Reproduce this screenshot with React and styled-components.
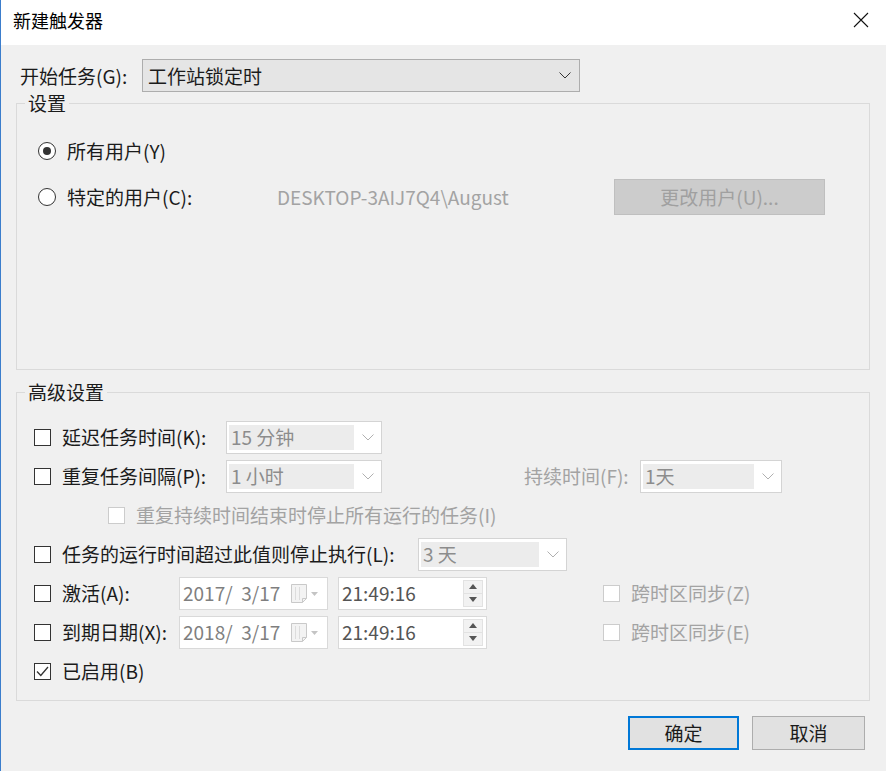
import React from 'react';
import styled, { createGlobalStyle } from 'styled-components';

const GlobalStyle = createGlobalStyle`
  html, body { margin: 0; padding: 0; background: #f0f0f0; }
  body { font-family: "Noto Sans CJK SC", "Microsoft YaHei", sans-serif; }
`;

const Window = styled.div`
  width: 886px;
  height: 771px;
  box-sizing: border-box;
  border-left: 1px solid #3b7dcc;
  background: #f0f0f0;
  display: flex;
  flex-direction: column;
  font-family: "Noto Sans CJK SC", "Microsoft YaHei", sans-serif;
  font-size: 19px;
  color: #1b1b1b;
  overflow: hidden;
`;

const TitleBar = styled.div`
  height: 45px;
  flex: none;
  background: #fff;
  display: flex;
  align-items: center;
  justify-content: space-between;
  padding: 0 17px 5px 12px;
  box-sizing: border-box;
`;

const Title = styled.span`
  font-size: 18px;
  line-height: 20px;
  color: #000;
`;

const Body = styled.div`
  padding: 14px 16px 0 15px;
  display: flex;
  flex-direction: column;
`;

const TopRow = styled.div`
  display: flex;
  align-items: center;
  height: 33px;
`;

const TopLabel = styled.span`
  width: 122px;
  margin-left: 4px;
  line-height: 20px;
  white-space: nowrap;
`;

const Select = styled.div`
  width: 438px;
  height: 33px;
  box-sizing: border-box;
  border: 1px solid #adadad;
  background: #e5e5e5;
  display: flex;
  align-items: center;
  justify-content: space-between;
  padding: 0 8px 0 5px;
  line-height: 20px;
`;

const Group = styled.fieldset`
  margin: ${p => p.$mt}px 0 0 0;
  padding: 0;
  border: 1px solid #dadada;
  height: ${p => p.$h}px;
  box-sizing: border-box;
  min-width: 0;
`;

const Legend = styled.legend`
  margin-left: 8px;
  padding: 0 3px;
  line-height: 20px;
  font-size: 19px;
`;

const GroupContent = styled.div`
  padding: ${p => p.$pt}px 0 0 ${p => p.$pl}px;
  display: flex;
  flex-direction: column;
  gap: ${p => p.$gap}px;
`;

const Row = styled.div`
  display: flex;
  align-items: center;
  height: ${p => p.$h || 34}px;
  padding-left: ${p => p.$pl || 0}px;
`;

const Radio = styled.span`
  width: 18px;
  height: 18px;
  box-sizing: border-box;
  border: 1px solid #333;
  border-radius: 50%;
  background: #fff;
  display: flex;
  align-items: center;
  justify-content: center;
  margin-right: 11px;
  flex: none;
  &::after {
    content: '';
    width: 8px;
    height: 8px;
    border-radius: 50%;
    background: #333;
    display: ${p => (p.$checked ? 'block' : 'none')};
  }
`;

const Text = styled.span`
  width: ${p => (p.$w ? `${p.$w}px` : 'auto')};
  margin-left: ${p => p.$ml || 0}px;
  color: ${p => (p.$dim ? '#a3a3a3' : '#1b1b1b')};
  line-height: 20px;
  white-space: nowrap;
  flex: none;
`;

const Button = styled.div`
  width: ${p => p.$w}px;
  height: ${p => p.$h}px;
  box-sizing: border-box;
  display: flex;
  align-items: center;
  justify-content: center;
  background: ${p => (p.$disabled ? '#cccccc' : '#e1e1e1')};
  border: ${p => (p.$primary ? '2px solid #0078d7' : p.$disabled ? '1px solid #bfbfbf' : '1px solid #adadad')};
  color: ${p => (p.$disabled ? '#a0a0a0' : '#1b1b1b')};
  line-height: 20px;
  flex: none;
`;

const Check = styled.span`
  width: 17px;
  height: 17px;
  box-sizing: border-box;
  border: 1px solid ${p => (p.$disabled ? '#cccccc' : '#333')};
  background: #fff;
  margin-right: 11px;
  margin-left: ${p => p.$ml || 0}px;
  display: flex;
  align-items: center;
  justify-content: center;
  flex: none;
`;

const Combo = styled.div`
  width: ${p => p.$w}px;
  height: 33px;
  box-sizing: border-box;
  border: 1px solid #d4d4d4;
  background: #fff;
  padding: 3px 0 3px 2px;
  display: flex;
  align-items: stretch;
  flex: none;
`;

const ComboField = styled.div`
  flex: 1;
  background: #ececec;
  color: #8c8c8c;
  padding-left: 2px;
  display: flex;
  align-items: center;
  line-height: 20px;
  white-space: nowrap;
`;

const ComboArrow = styled.div`
  width: 27px;
  display: flex;
  align-items: center;
  justify-content: center;
`;

const DateBox = styled.div`
  width: 149px;
  height: 33px;
  box-sizing: border-box;
  border: 1px solid #d9d9d9;
  background: #fff;
  display: flex;
  align-items: center;
  padding: 0 8px 0 3px;
  margin-right: ${p => p.$mr || 0}px;
  color: ${p => p.$color};
  line-height: 20px;
  flex: none;
`;

const Grow = styled.span`
  flex: 1;
  white-space: pre;
`;

const Spinner = styled.div`
  display: flex;
  flex-direction: column;
  width: 20px;
  height: 27px;
  margin-right: -5px;
`;

const SpinHalf = styled.div`
  flex: 1;
  background: #f2f2f2;
  border: 1px solid #e2e2e2;
  display: flex;
  align-items: center;
  justify-content: center;
  & + & { border-top: none; }
`;

const Footer = styled.div`
  display: flex;
  justify-content: flex-end;
  gap: 13px;
  margin-top: 15px;
  padding-right: 5px;
`;

const Chevron = ({ color = '#333' }) => (
  <svg width="12" height="7" viewBox="0 0 12 7">
    <polyline points="0.5,0.5 6,6 11.5,0.5" fill="none" stroke={color} strokeWidth="1" />
  </svg>
);

const CloseIcon = () => (
  <svg width="16" height="16" viewBox="0 0 16 16">
    <path d="M1 1 L15 15 M15 1 L1 15" stroke="#111" strokeWidth="1.1" />
  </svg>
);

const Tick = () => (
  <svg width="13" height="11" viewBox="0 0 13 11">
    <polyline points="1,5.5 4.8,9.5 12,1" fill="none" stroke="#333" strokeWidth="1.3" />
  </svg>
);

const CalendarIcon = () => (
  <svg width="28" height="19" viewBox="0 0 28 19">
    <path d="M0.5 0.5 H15.5 V14.5 L11.5 18.5 H0.5 Z" fill="#f3f3f3" stroke="#c9c9c9" />
    <path d="M11.5 18.5 V14.5 H15.5" fill="none" stroke="#c9c9c9" />
    <line x1="4.5" y1="3" x2="4.5" y2="16" stroke="#dcdcdc" />
    <line x1="8.5" y1="3" x2="8.5" y2="16" stroke="#dcdcdc" />
    <polygon points="20,8 27,8 23.5,12" fill="#c4c4c4" />
  </svg>
);

const Tri = ({ up }) => (
  <svg width="8" height="5" viewBox="0 0 8 5">
    <polygon points={up ? '0,5 8,5 4,0' : '0,0 8,0 4,5'} fill="#555" />
  </svg>
);

const DisabledCombo = ({ w, value }) => (
  <Combo $w={w}>
    <ComboField>{value}</ComboField>
    <ComboArrow><Chevron color="#b0b0b0" /></ComboArrow>
  </Combo>
);

const DateField = ({ value }) => (
  <DateBox $mr={10} $color="#7f7f7f">
    <Grow>{value}</Grow>
    <CalendarIcon />
  </DateBox>
);

const TimeField = ({ value }) => (
  <DateBox $color="#555">
    <Grow>{value}</Grow>
    <Spinner>
      <SpinHalf><Tri up /></SpinHalf>
      <SpinHalf><Tri /></SpinHalf>
    </Spinner>
  </DateBox>
);

const App = () => (
  <>
    <GlobalStyle />
    <Window>
      <TitleBar>
        <Title>新建触发器</Title>
        <CloseIcon />
      </TitleBar>
      <Body>
        <TopRow>
          <TopLabel>开始任务(G):</TopLabel>
          <Select>
            <span>工作站锁定时</span>
            <Chevron />
          </Select>
        </TopRow>

        <Group $mt={1} $h={277}>
          <Legend>设置</Legend>
          <GroupContent $pt={20} $pl={21} $gap={10}>
            <Row $h={36}>
              <Radio $checked />
              <Text>所有用户(Y)</Text>
            </Row>
            <Row $h={36}>
              <Radio />
              <Text $w={210}>特定的用户(C):</Text>
              <Text $w={337} $dim>DESKTOP-3AIJ7Q4\August</Text>
              <Button $w={211} $h={36} $disabled>更改用户(U)...</Button>
            </Row>
          </GroupContent>
        </Group>

        <Group $mt={12} $h={319}>
          <Legend>高级设置</Legend>
          <GroupContent $pt={18} $pl={17} $gap={5}>
            <Row>
              <Check />
              <Text $w={164}>延迟任务时间(K):</Text>
              <DisabledCombo w={156} value="15 分钟" />
            </Row>
            <Row>
              <Check />
              <Text $w={164}>重复任务间隔(P):</Text>
              <DisabledCombo w={156} value="1 小时" />
              <Text $w={116} $ml={142} $dim>持续时间(F):</Text>
              <DisabledCombo w={142} value="1天" />
            </Row>
            <Row $pl={74}>
              <Check $disabled />
              <Text $dim>重复持续时间结束时停止所有运行的任务(I)</Text>
            </Row>
            <Row>
              <Check />
              <Text $w={356}>任务的运行时间超过此值则停止执行(L):</Text>
              <DisabledCombo w={149} value="3 天" />
            </Row>
            <Row>
              <Check />
              <Text $w={117}>激活(A):</Text>
              <DateField value="2017/  3/17" />
              <TimeField value="21:49:16" />
              <Check $disabled $ml={116} />
              <Text $dim>跨时区同步(Z)</Text>
            </Row>
            <Row>
              <Check />
              <Text $w={117}>到期日期(X):</Text>
              <DateField value="2018/  3/17" />
              <TimeField value="21:49:16" />
              <Check $disabled $ml={116} />
              <Text $dim>跨时区同步(E)</Text>
            </Row>
            <Row>
              <Check><Tick /></Check>
              <Text>已启用(B)</Text>
            </Row>
          </GroupContent>
        </Group>

        <Footer>
          <Button $w={111} $h={34} $primary>确定</Button>
          <Button $w={113} $h={34}>取消</Button>
        </Footer>
      </Body>
    </Window>
  </>
);

export default App;
